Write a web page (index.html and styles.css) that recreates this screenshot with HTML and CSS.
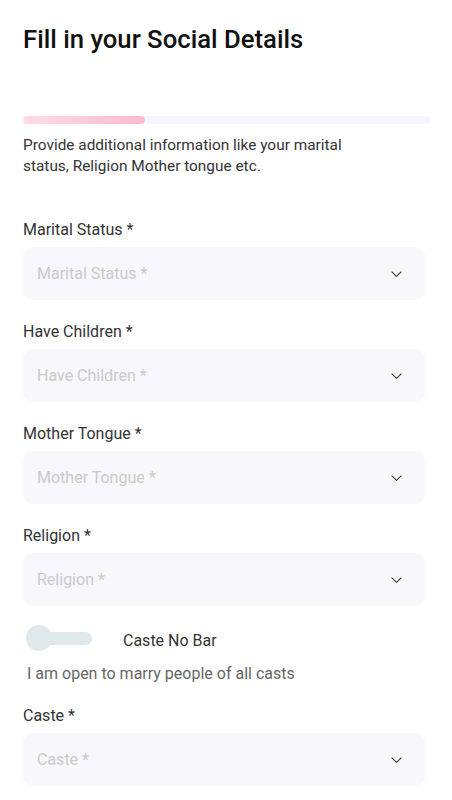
FILE: index.html
```html
<!DOCTYPE html>
<html lang="en">
<head>
<meta charset="utf-8">
<title>Social Details</title>
<link rel="stylesheet" href="styles.css">
</head>
<body>
<main class="page">
  <h1 class="title">Fill in your Social Details</h1>
  <div class="progress"><div class="progress-fill"></div></div>
  <p class="desc">Provide additional information like your marital status, Religion Mother tongue etc.</p>

  <div class="field">
    <div class="label">Marital Status *</div>
    <div class="select"><span class="placeholder">Marital Status *</span>
      <svg class="chev" width="11" height="6" viewBox="0 0 11 6"><path d="M0.6 0.6l4.9 4.7 4.9-4.7" fill="none" stroke="#333" stroke-width="1.1"/></svg></div>
  </div>
  <div class="field">
    <div class="label">Have Children *</div>
    <div class="select"><span class="placeholder">Have Children *</span>
      <svg class="chev" width="11" height="6" viewBox="0 0 11 6"><path d="M0.6 0.6l4.9 4.7 4.9-4.7" fill="none" stroke="#333" stroke-width="1.1"/></svg></div>
  </div>
  <div class="field">
    <div class="label">Mother Tongue *</div>
    <div class="select"><span class="placeholder">Mother Tongue *</span>
      <svg class="chev" width="11" height="6" viewBox="0 0 11 6"><path d="M0.6 0.6l4.9 4.7 4.9-4.7" fill="none" stroke="#333" stroke-width="1.1"/></svg></div>
  </div>
  <div class="field">
    <div class="label">Religion *</div>
    <div class="select"><span class="placeholder">Religion *</span>
      <svg class="chev" width="11" height="6" viewBox="0 0 11 6"><path d="M0.6 0.6l4.9 4.7 4.9-4.7" fill="none" stroke="#333" stroke-width="1.1"/></svg></div>
  </div>

  <div class="toggle-row">
    <div class="toggle"><span class="knob"></span></div>
    <span class="toggle-label">Caste No Bar</span>
  </div>
  <p class="note">I am open to marry people of all casts</p>

  <div class="field">
    <div class="label">Caste *</div>
    <div class="select"><span class="placeholder">Caste *</span>
      <svg class="chev" width="11" height="6" viewBox="0 0 11 6"><path d="M0.6 0.6l4.9 4.7 4.9-4.7" fill="none" stroke="#333" stroke-width="1.1"/></svg></div>
  </div>
</main>
</body>
</html>
```
FILE: styles.css
```css
* { box-sizing: border-box; }
html, body { margin: 0; padding: 0; background: #fff; }
body {
  font-family: Roboto, "Noto Sans", Arial, sans-serif;
  color: #222;
  width: 452px;
  overflow: hidden;
}
.page {
  padding: 24px 27px 0 23px;
  display: flex;
  flex-direction: column;
}
.title {
  margin: 0;
  font-size: 25.7px;
  line-height: 30px;
  font-weight: 500;
  color: #111;
}
.progress {
  margin-top: 62px;
  margin-right: -5px;
  height: 8px;
  border-radius: 4px;
  background: #f7f6fc;
  overflow: hidden;
}
.progress-fill {
  width: 122px;
  height: 100%;
  border-radius: 4px;
  background: linear-gradient(90deg, #fcdce7, #f9b9cf);
}
.desc {
  margin: 11px 0 0;
  max-width: 345px;
  font-size: 15.4px;
  line-height: 21px;
  color: #333;
}
.field {
  display: flex;
  flex-direction: column;
  margin-top: 22px;
}
.desc + .field { margin-top: 43px; }
.label {
  font-size: 16px;
  line-height: 20px;
  color: #333;
  margin-bottom: 7px;
}
.select {
  height: 53px;
  border-radius: 10px;
  background: #f8f7fc;
  display: flex;
  align-items: center;
  justify-content: space-between;
  padding: 0 23px 0 14px;
}
.placeholder {
  font-size: 16px;
  color: #cac9cf;
}
.chev { display: block; margin-top: 1px; }
.toggle-row {
  margin-top: 19px;
  display: flex;
  align-items: center;
  height: 26px;
}
.toggle {
  position: relative;
  margin-left: 3px;
  width: 66px;
  height: 13px;
  border-radius: 7px;
  background: #dfe8eb;
}
.knob {
  position: absolute;
  left: 0;
  top: -6.5px;
  width: 26px;
  height: 26px;
  border-radius: 50%;
  background: #dfe8eb;
}
.toggle-label {
  margin-left: 31px;
  margin-top: 4px;
  font-size: 16px;
  color: #333;
}
.note {
  margin: 13px 0 0 4px;
  font-size: 16px;
  line-height: 19px;
  color: #666;
}
.note + .field { margin-top: 23px; }
```
